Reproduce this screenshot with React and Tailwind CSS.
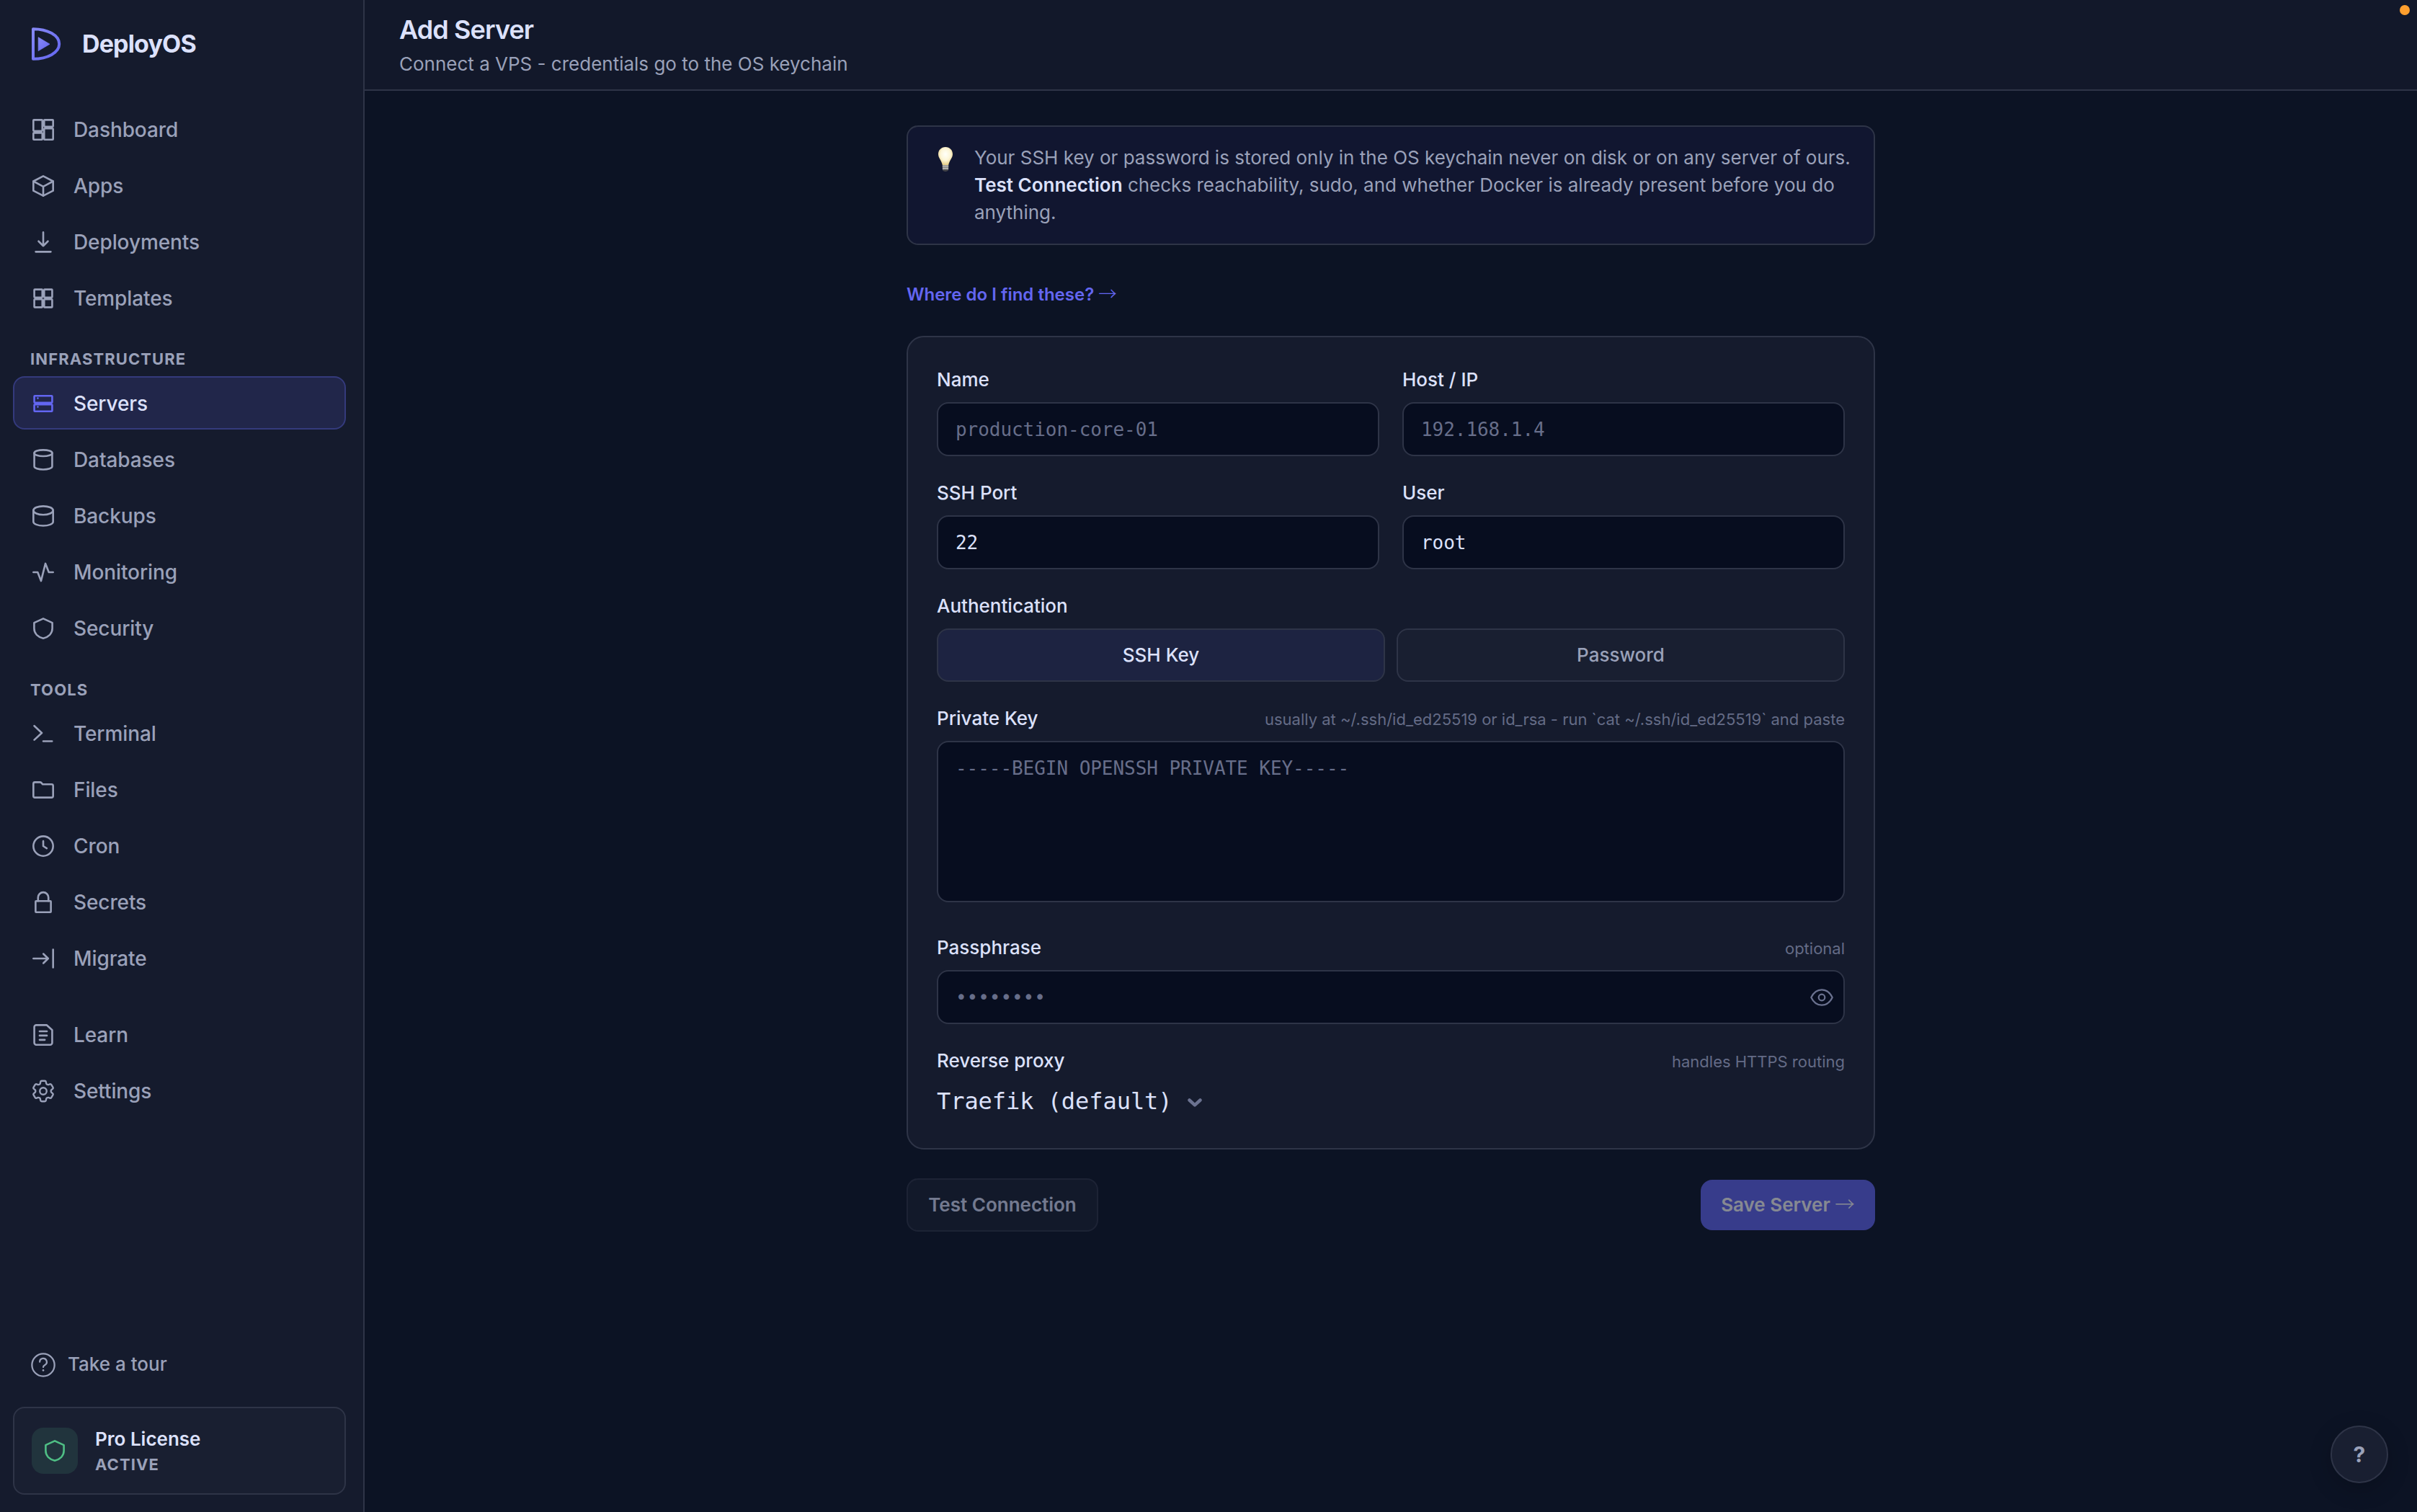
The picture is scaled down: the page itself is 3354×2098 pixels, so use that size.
import React from 'react';
import clsx from 'clsx';
import { HiOutlineCog6Tooth } from 'react-icons/hi2';

const Glyph = ({ children, className }) => (
  <svg
    viewBox="0 0 20 20"
    fill="none"
    stroke="currentColor"
    strokeWidth="1.45"
    strokeLinecap="round"
    strokeLinejoin="round"
    className={clsx('size-9 shrink-0', className)}
  >
    {children}
  </svg>
);

const Shield = ({ className }) => (
  <Glyph className={className}>
    <path d="M10 2.4 17 5.6V10c0 3.8-2.9 6.6-7 7.6-4.1-1-7-3.8-7-7.6V5.6L10 2.4Z" />
  </Glyph>
);

const icons = {
  dashboard: (
    <Glyph>
      <rect x="2.4" y="2.4" width="6.9" height="8.6" rx=".4" />
      <rect x="2.4" y="12.4" width="6.9" height="5.2" rx=".4" />
      <rect x="10.7" y="2.4" width="6.9" height="5.2" rx=".4" />
      <rect x="10.7" y="9" width="6.9" height="8.6" rx=".4" />
    </Glyph>
  ),
  apps: (
    <Glyph>
      <path d="m10 2.4 7.6 4v7.3l-7.6 3.9-7.6-3.9V6.4l7.6-4Z" />
      <path d="m2.4 6.4 7.6 4.1 7.6-4.1M10 10.5v7.1" />
    </Glyph>
  ),
  deployments: (
    <Glyph>
      <path d="M10 2.4v10.5M6.4 9.3 10 12.9l3.6-3.6M4.2 17.4h11.6" />
    </Glyph>
  ),
  templates: (
    <Glyph>
      <rect x="3.1" y="3.1" width="6.2" height="6.2" rx=".4" />
      <rect x="10.7" y="3.1" width="6.2" height="6.2" rx=".4" />
      <rect x="3.1" y="10.7" width="6.2" height="6.2" rx=".4" />
      <rect x="10.7" y="10.7" width="6.2" height="6.2" rx=".4" />
    </Glyph>
  ),
  servers: (
    <Glyph className="text-[#6366f1]">
      <rect x="3.1" y="4" width="13.8" height="5.3" rx=".4" />
      <rect x="3.1" y="10.7" width="13.8" height="5.3" rx=".4" />
      <path d="M5.8 5.9h.01M5.8 12.5h.01" />
    </Glyph>
  ),
  databases: (
    <Glyph>
      <ellipse cx="10" cy="4.8" rx="6.9" ry="2.4" />
      <path d="M3.1 4.8v10.4c0 1.3 3.1 2.3 6.9 2.3s6.9-1 6.9-2.3V4.8" />
    </Glyph>
  ),
  backups: (
    <Glyph>
      <ellipse cx="10" cy="5.7" rx="7.6" ry="3.3" />
      <path d="M2.4 5.7v8.7c0 1.7 3.4 3.1 7.6 3.1s7.6-1.4 7.6-3.1V5.7" />
    </Glyph>
  ),
  monitoring: (
    <Glyph>
      <path d="M2.4 10h3.3l2.6 6.7 3.4-13.4 2.6 6.7h3.3" />
    </Glyph>
  ),
  security: <Shield />,
  terminal: (
    <Glyph>
      <path d="m3.1 4 5.8 5.4-5.8 5.4M10 15.8h6.8" />
    </Glyph>
  ),
  files: (
    <Glyph>
      <path d="M2.4 14.7V5.3c0-.7.5-1.2 1.2-1.2h3.9c.4 0 .8.2 1.1.5l1 1.1h6.8c.7 0 1.2.5 1.2 1.2v7.8c0 .7-.5 1.2-1.2 1.2H3.6c-.7 0-1.2-.5-1.2-1.2Z" />
    </Glyph>
  ),
  cron: (
    <Glyph>
      <circle cx="10" cy="10" r="7.6" />
      <path d="M10 6.2V10l2.7 1.7" />
    </Glyph>
  ),
  secrets: (
    <Glyph>
      <rect x="4.1" y="9" width="11.8" height="8.6" rx=".4" />
      <path d="M6 9V6.3a4 4 0 0 1 8 0V9" />
    </Glyph>
  ),
  migrate: (
    <Glyph>
      <path d="M2.4 10h11.4M10.1 6.4l3.7 3.6-3.7 3.6M17.6 3.1v13.8" />
    </Glyph>
  ),
  learn: (
    <Glyph>
      <path d="M4.6 2.4h8l4.3 3.9v9.8c0 .8-.7 1.5-1.5 1.5H4.6c-.8 0-1.5-.7-1.5-1.5V3.9c0-.8.7-1.5 1.5-1.5Z" />
      <path d="M7.2 7.2h5.6M7.2 10.5h5.6M7.2 13.8h4" />
    </Glyph>
  ),
  settings: <HiOutlineCog6Tooth className="-mx-px size-[38px] shrink-0" />,
};

const sections = [
  {
    items: [
      ['dashboard', 'Dashboard'],
      ['apps', 'Apps'],
      ['deployments', 'Deployments'],
      ['templates', 'Templates'],
    ],
  },
  {
    title: 'Infrastructure',
    items: [
      ['servers', 'Servers'],
      ['databases', 'Databases'],
      ['backups', 'Backups'],
      ['monitoring', 'Monitoring'],
      ['security', 'Security'],
    ],
  },
  {
    title: 'Tools',
    items: [
      ['terminal', 'Terminal'],
      ['files', 'Files'],
      ['cron', 'Cron'],
      ['secrets', 'Secrets'],
      ['migrate', 'Migrate'],
    ],
  },
  {
    items: [
      ['learn', 'Learn'],
      ['settings', 'Settings'],
    ],
  },
];

const Logo = () => (
  <svg viewBox="0 0 44 48" fill="none" className="h-12 w-11 shrink-0">
    <defs>
      <linearGradient id="logo" x1="0" y1="0" x2="1" y2="1">
        <stop offset="0" stopColor="#8688f5" />
        <stop offset="1" stopColor="#6366f1" />
      </linearGradient>
    </defs>
    <path
      d="M4 3.2C24 3.2 40.2 12 40.2 24S24 44.8 4 44.8Z"
      stroke="url(#logo)"
      strokeWidth="4"
      strokeLinejoin="round"
    />
    <path d="M11.2 14.8 27 24.2 11.2 33.6Z" fill="url(#logo)" stroke="url(#logo)" strokeWidth=".8" strokeLinejoin="round" />
  </svg>
);

const NavItem = ({ id, label, active }) => (
  <li
    className={clsx(
      'flex h-[74px] items-center gap-6 rounded-2xl border-2 px-[22px] text-[28px] font-medium',
      active
        ? 'mb-px border-[#343a7c] bg-[#21264a] pt-0.5 text-[#dce1fb]'
        : 'border-transparent text-[#9aa1b9]'
    )}
  >
    {icons[id]}
    <span className="tracking-[-0.1px]">{label}</span>
  </li>
);

const Sidebar = () => (
  <aside className="flex w-[506px] shrink-0 flex-col border-r-2 border-[#2e3447] bg-[#151b2d] px-[18px] pb-6 pr-6">
    <div className="flex h-[122px] items-center gap-7 pl-6">
      <Logo />
      <span className="text-[34px] leading-10 font-bold tracking-[-0.025em] text-[#dce1fb]">DeployOS</span>
    </div>

    <nav className="flex flex-col pt-[21px]">
      {sections.map((section, i) => (
        <div key={i} className={clsx('flex flex-col', i === 2 && 'pt-px', i === 3 && 'pt-8')}>
          {section.title && (
            <h2 className="flex h-[71px] items-end pb-[11px] pl-6 text-[22px] leading-[26px] font-bold tracking-[1.1px] text-[#9aa1b9] uppercase">
              {section.title}
            </h2>
          )}
          <ul className="flex flex-col gap-1">
            {section.items.map(([id, label]) => (
              <NavItem key={id} id={id} label={label} active={id === 'servers'} />
            ))}
          </ul>
        </div>
      ))}
    </nav>

    <div className="mt-auto mb-[22px] flex h-[72px] items-center gap-4 pl-6 text-[26px] font-medium text-[#9aa1b9]">
      <Glyph className="overflow-visible">
        <circle cx="10" cy="10" r="8.7" strokeWidth="1.25" />
        <path d="M7.3 7.6a2.7 2.7 0 1 1 4 2.4c-.9.5-1.3.9-1.3 1.7" strokeWidth="1.25" />
        <path d="M10 14.1h.01" strokeWidth="1.5" />
      </Glyph>
      <span className="pb-[3px]">Take a tour</span>
    </div>

    <div className="flex h-[122px] items-center gap-6 rounded-2xl border-2 border-[#2e3447] bg-[#191f31] px-6">
      <div className="flex size-16 items-center justify-center rounded-2xl bg-[#21343d] text-[#4fbf85]">
        <Shield />
      </div>
      <div className="flex flex-col pt-0.5">
        <span className="text-[26px] leading-9 font-semibold text-[#dce1fb]">Pro License</span>
        <span className="text-[22px] leading-[34px] font-bold tracking-[1.1px] text-[#9aa1b9]">ACTIVE</span>
      </div>
    </div>
  </aside>
);

const Arrow = () => <span className="font-['Noto_Sans_CJK_SC',sans-serif] text-[1.06em] leading-none font-light">→</span>;

const Bulb = () => (
  <svg viewBox="0 0 24 36" className="mt-[3px] h-9 w-6 shrink-0">
    <defs>
      <radialGradient id="bulb" cx=".5" cy=".4" r=".6">
        <stop offset="0" stopColor="#fffffa" />
        <stop offset=".55" stopColor="#fdf6d8" />
        <stop offset="1" stopColor="#e6cd86" />
      </radialGradient>
    </defs>
    <path d="M12 1C6 1 2 5.4 2 11c0 5.2 4.6 8.6 5.8 15h8.4C17.4 19.6 22 16.2 22 11c0-5.600-4-10-10-10Z" fill="url(#bulb)" />
    <path d="M7.8 26h8.4v5.5c0 1.2-1.6 3-4.2 3s-4.2-1.8-4.2-3Z" fill="#8d8c8a" />
    <path d="M7.8 27.5h8.4M8 30.5h8" stroke="#c9c7c2" strokeWidth="1.2" />
    <path d="M9.5 33.5h5" stroke="#3c3c40" strokeWidth="2" strokeLinecap="round" />
  </svg>
);

const Label = ({ children, hint }) => (
  <div className="flex h-8 items-center justify-between text-[26px] leading-8 font-medium text-[#dce1fb]">
    <span>{children}</span>
    {hint && <span className="pt-0.5 text-[22px] font-normal text-[#646b86]">{hint}</span>}
  </div>
);

const inputClass =
  "flex rounded-2xl border-2 border-[#2e3447] bg-[#070d1f] px-6 font-['DejaVu_Sans_Mono',monospace] text-[26px] tracking-[-0.05px]";

const Field = ({ label, hint, value, placeholder, children }) => (
  <div className="flex flex-col gap-[15px]">
    <Label hint={hint}>{label}</Label>
    <div className={clsx(inputClass, 'h-[75px] items-center justify-between')}>
      <span className={clsx('pt-0.5', value ? 'text-[#dce1fb]' : 'text-[#676e8a]')}>{value || placeholder}</span>
      {children}
    </div>
  </div>
);

const Eye = () => (
  <svg
    viewBox="0 0 32 24"
    fill="none"
    stroke="#6b7290"
    strokeWidth="2.2"
    strokeLinejoin="round"
    className="-mr-[10px] h-6 w-8"
  >
    <path d="M1.3 12C4.5 5.3 9.5 1.3 16 1.3S27.5 5.3 30.7 12C27.5 18.7 22.5 22.7 16 22.7S4.5 18.7 1.3 12Z" />
    <circle cx="16" cy="12" r="4.3" />
  </svg>
);

const ServerForm = () => (
  <section className="flex h-[1129px] flex-col gap-[35px] rounded-3xl border-2 border-[#2e3447] bg-[#151b2d] px-10 pt-[43px]">
    <div className="grid grid-cols-2 gap-x-8 gap-y-[35px]">
      <Field label="Name" placeholder="production-core-01" />
      <Field label="Host / IP" placeholder="192.168.1.4" />
      <Field label="SSH Port" value="22" />
      <Field label="User" value="root" />
    </div>

    <div className="flex flex-col gap-[15px]">
      <Label>Authentication</Label>
      <div className="grid grid-cols-2 gap-4 text-[26px] font-medium">
        <div className="flex h-[74px] items-center justify-center rounded-2xl border-2 border-[#2e3447] bg-[#1d2341] pb-0.5 text-[#dce1fb]">
          SSH Key
        </div>
        <div className="flex h-[74px] items-center justify-center rounded-2xl border-2 border-[#2e3447] bg-[#191f31] pb-0.5 text-[#9aa1b9]">
          Password
        </div>
      </div>
    </div>

    <div className="flex flex-col gap-[15px]">
      <Label hint="usually at ~/.ssh/id_ed25519 or id_rsa - run `cat ~/.ssh/id_ed25519` and paste">
        Private Key
      </Label>
      <div className={clsx(inputClass, 'mb-3 h-56 pt-[18px] leading-9 text-[#676e8a]')}>
        -----BEGIN OPENSSH PRIVATE KEY-----
      </div>
    </div>

    <Field label="Passphrase" hint="optional" placeholder="••••••••">
      <Eye />
    </Field>

    <div className="flex flex-col gap-5">
      <Label hint="handles HTTPS routing">Reverse proxy</Label>
      <div className="flex items-center gap-[21px] font-['DejaVu_Sans_Mono',monospace] text-[32px] leading-10 tracking-[-0.06px] text-[#dce1fb]">
        Traefik (default)
        <svg viewBox="0 0 20 12" fill="none" className="mt-1 h-3 w-5">
          <path d="m2.5 2.5 7.5 6.8 7.5-6.8" stroke="#6b7290" strokeWidth="4.5" strokeLinecap="round" strokeLinejoin="round" />
        </svg>
      </div>
    </div>
  </section>
);

const App = () => (
  <div className="flex h-[2098px] w-[3354px] overflow-hidden bg-[#0c1324] font-['Inter',sans-serif] [font-optical-sizing:none]">
    <Sidebar />

    <div className="relative flex flex-1 flex-col">
      <header className="flex h-[126px] flex-col border-b-2 border-[#2e3447] bg-[#12182a] px-12 pt-[18px]">
        <h1 className="text-[36px] leading-[46px] font-semibold tracking-[-0.025em] text-[#dce1fb]">Add Server</h1>
        <p className="pt-1 text-[26px] leading-[42px] text-[#9aa1b9]">
          Connect a VPS - credentials go to the OS keychain
        </p>
      </header>

      <main className="mx-auto flex w-[1344px] flex-col pt-12">
        <div className="flex h-[166px] gap-7 rounded-2xl border-2 border-[#2e3447] bg-[#111630] pt-6 pr-6 pl-10">
          <Bulb />
          <p className="text-[26px] leading-[38px] text-[#9aa1b9]">
            Your SSH key or password is stored only in the OS keychain never on disk or on any server of ours.
            <br />
            <strong className="font-semibold text-[#dce1fb]">Test Connection</strong> checks reachability, sudo, and
            whether Docker is already present before you do
            <br />
            anything.
          </p>
        </div>

        <a className="mt-[53px] mb-[43px] h-[30px] text-[24px] leading-[30px] font-semibold text-[#6366f1]">
          Where do I find these? <Arrow />
        </a>

        <ServerForm />

        <div className="flex items-center justify-between pt-10 text-[26px] font-semibold">
          <button className="flex h-[74px] w-[266px] items-center justify-center rounded-2xl border-2 border-[#2e3447] bg-[#191f31] pb-0.5 text-[#dce1fb] opacity-50">
            Test Connection
          </button>
          <button className="h-[70px] w-[242px] rounded-2xl bg-[#6366f1] pb-0.5 text-white opacity-50">
            Save Server <Arrow />
          </button>
        </div>
      </main>

      <div className="absolute top-[7px] right-2.5 size-3.5 rounded-full bg-[#ff9f2e]" />

      <button className="absolute right-10 bottom-10 flex size-20 items-center justify-center rounded-full border-2 border-[#2e3447] bg-[#191f31] text-[30px] font-bold text-[#9aa1b9] shadow-[0_8px_32px_rgba(0,0,0,0.2)]">
        ?
      </button>
    </div>
  </div>
);

export default App;
